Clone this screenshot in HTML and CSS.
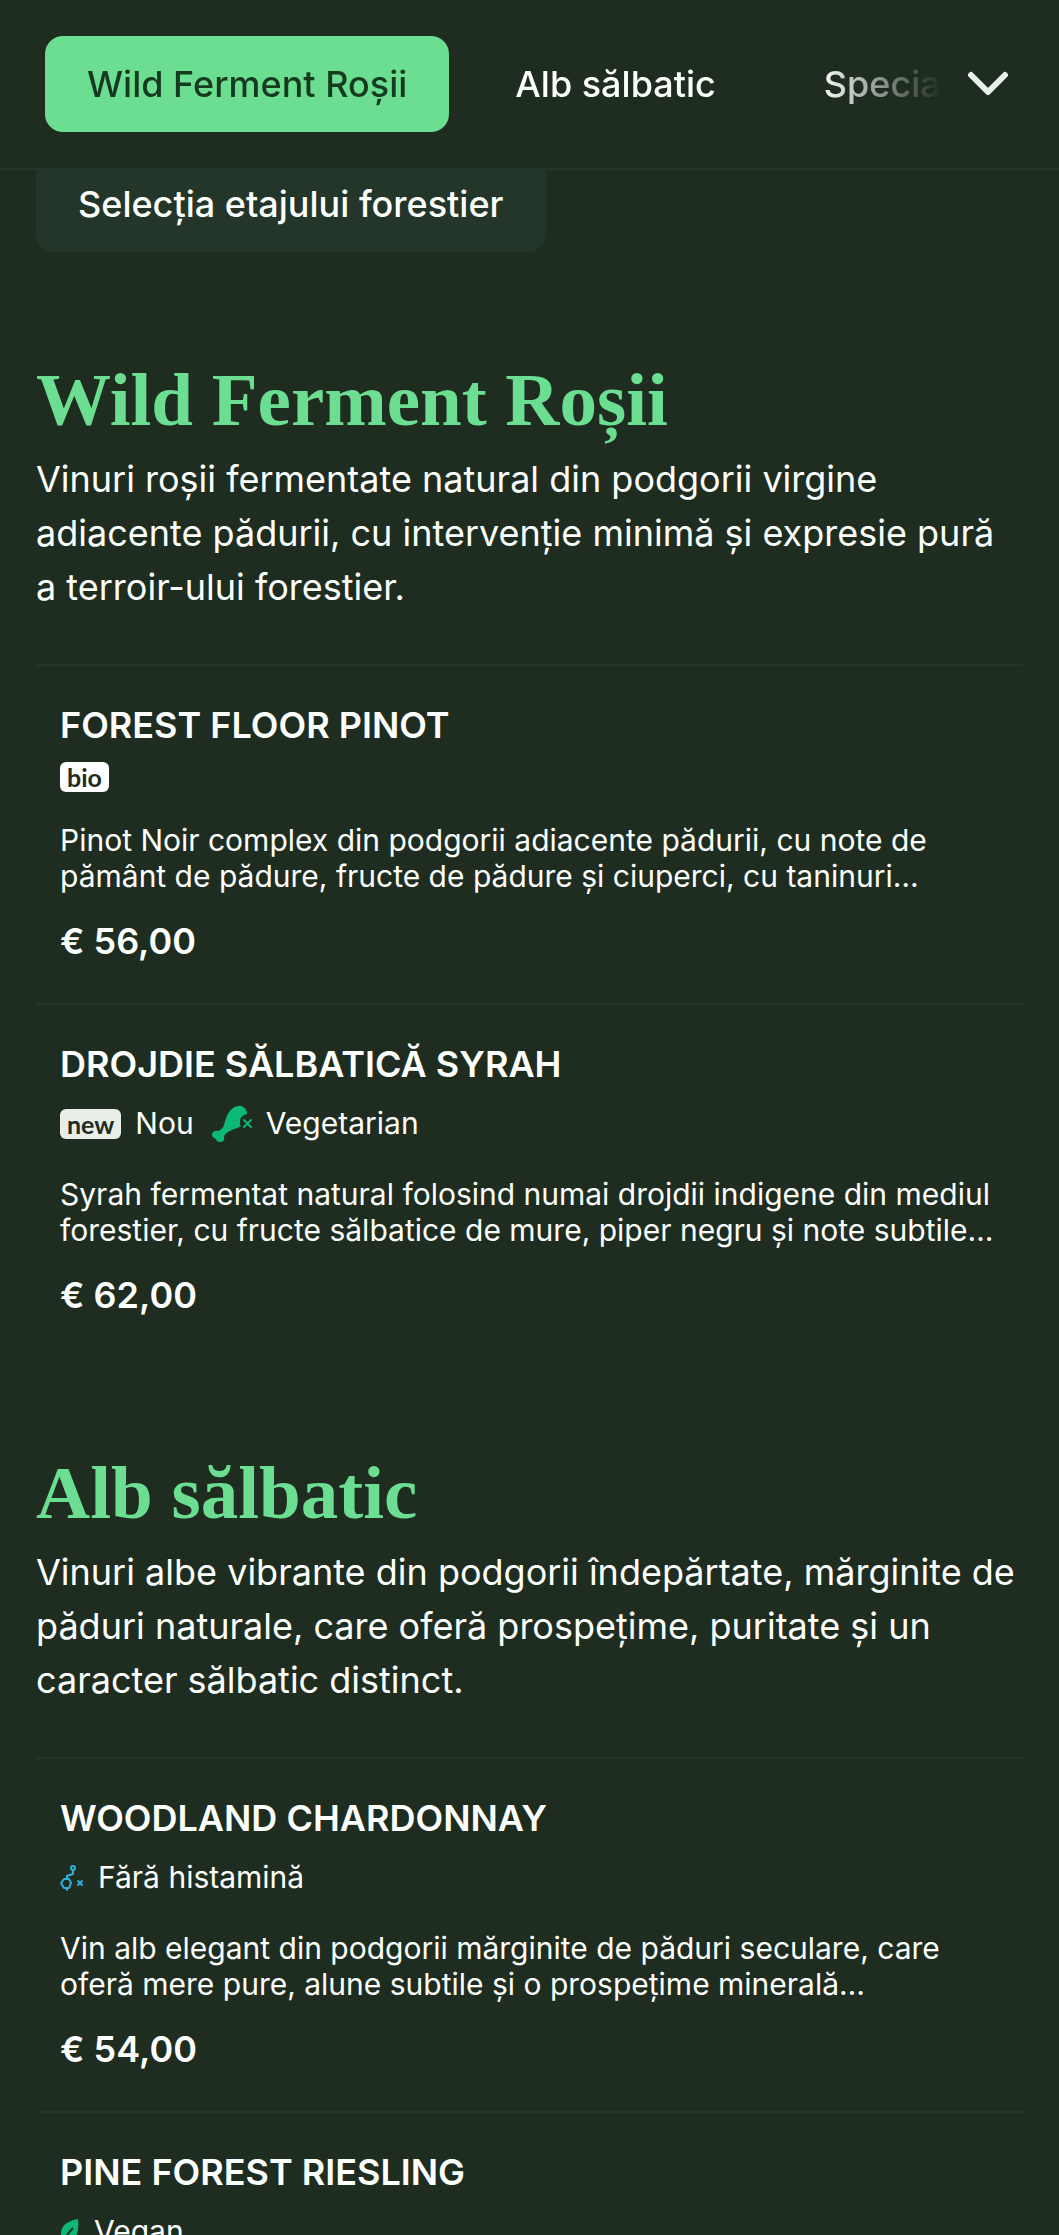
FILE: index.html
```html
<!DOCTYPE html>
<html lang="ro">
<head>
  <meta charset="UTF-8" />
  <meta name="viewport" content="width=device-width, initial-scale=1.0"/>
  <title>Meniu vinuri</title>
  <link rel="stylesheet" href="styles.css">
</head>
<body>
  <header class="topbar">
    <nav class="tabs">
      <a class="tab active" href="#rosii">Wild Ferment Roșii</a>
      <a class="tab" href="#alb">Alb sălbatic</a>
      <a class="tab" href="#special">Specialități</a>
    </nav>
    <button class="toggle" aria-label="Toate categoriile">
      <svg width="42" height="26" viewBox="0 0 42 26" fill="none" stroke="currentColor" stroke-width="6" stroke-linecap="round" stroke-linejoin="round">
        <path d="M4 4l17 17L38 4"/>
      </svg>
    </button>
  </header>

  <main class="menu">
    <a class="chip" href="#selectia">Selecția etajului forestier</a>

    <section class="category" id="rosii">
      <h2>Wild Ferment Roșii</h2>
      <p class="intro">Vinuri roșii fermentate natural din podgorii virgine adiacente pădurii, cu intervenție minimă și expresie pură a terroir-ului forestier.</p>

      <article class="item">
        <h3>FOREST FLOOR PINOT</h3>
        <div class="tags">
          <span class="badge bio">bio</span>
        </div>
        <p class="desc">Pinot Noir complex din podgorii adiacente pădurii, cu note de pământ de pădure, fructe de pădure și ciuperci, cu taninuri…</p>
        <div class="price">€ 56,00</div>
      </article>

      <article class="item">
        <h3>DROJDIE SĂLBATICĂ SYRAH</h3>
        <div class="tags">
          <span class="tag"><span class="badge new">new</span>Nou</span>
          <span class="tag">
            <svg width="40" height="38" viewBox="0 0 40 38">
              <path fill="#0bb874" d="M12 20C14 11 18 2 26 1c5-1 9 3 9 8-4 1-7 3-7 8 0 2 0 3 1 4-4 3-9 3-13 6-2 1-4 3-4 5 1 3-1 5-4 5-2 0-4-1-4-3-2-1-4-2-4-4 0-4 4-5 7-4 2-2 4-3 5-6z"/>
              <path stroke="#0bb874" stroke-width="2" stroke-linecap="round" d="M32 15l7 7M39 15l-7 7"/>
            </svg>
            Vegetarian
          </span>
        </div>
        <p class="desc">Syrah fermentat natural folosind numai drojdii indigene din mediul forestier, cu fructe sălbatice de mure, piper negru și note subtile…</p>
        <div class="price">€ 62,00</div>
      </article>
    </section>

    <section class="category" id="alb">
      <h2>Alb sălbatic</h2>
      <p class="intro">Vinuri albe vibrante din podgorii îndepărtate, mărginite de păduri naturale, care oferă prospețime, puritate și un caracter sălbatic distinct.</p>

      <article class="item">
        <h3>WOODLAND CHARDONNAY</h3>
        <div class="tags">
          <span class="tag">
            <svg width="24" height="26" viewBox="0 0 24 26" fill="none" stroke="#2db1dc" stroke-width="2" stroke-linecap="round" stroke-linejoin="round">
              <circle cx="13" cy="3" r="2"/>
              <path d="M13 5v4l-6 2v3M4 14h5l2 4-2 5H4l-3-5zM7 23v2M18 16l4 4M22 16l-4 4"/>
            </svg>
            Fără histamină
          </span>
        </div>
        <p class="desc">Vin alb elegant din podgorii mărginite de păduri seculare, care oferă mere pure, alune subtile și o prospețime minerală…</p>
        <div class="price">€ 54,00</div>
      </article>

      <article class="item">
        <h3>PINE FOREST RIESLING</h3>
        <div class="tags">
          <span class="tag">
            <svg width="20" height="26" viewBox="0 0 20 26">
              <path fill="#0bb874" d="M18 0c1 10 0 20-9 22l-4-1-2 4-2-1 1-5C-2 9 6 2 18 0z"/>
              <path fill="none" stroke="#1f2d21" stroke-width="2" d="M13 9C9 13 6 17 4 22"/>
            </svg>
            Vegan
          </span>
        </div>
      </article>
    </section>
  </main>
</body>
</html>
```
FILE: styles.css
```css
* {
  box-sizing: border-box;
}
body {
  margin: 0;
  height: 100vh;
  overflow: hidden;
  background: #1f2d21;
  color: #fcfffc;
  font-family: Inter, "Noto Sans", sans-serif;
  font-size: 36px;
  line-height: 54px;
}
h2, h3, p {
  margin: 0;
}
a {
  color: inherit;
  text-decoration: none;
}

/* Top navigation */
.topbar {
  position: relative;
  z-index: 2;
  display: flex;
  align-items: flex-start;
  padding: 36px 50px 36px 45px;
  background: #1f2d21;
  border-bottom: 2px solid #24362a;
}
.tabs {
  display: flex;
  flex: 1;
  gap: 24px;
  min-width: 0;
  overflow: hidden;
  -webkit-mask-image: linear-gradient(to left, transparent, #000 120px);
  mask-image: linear-gradient(to left, transparent, #000 120px);
}
.tab, .chip {
  padding: 21px 42px;
  border-radius: 18px;
  font-weight: 500;
  white-space: nowrap;
}
.tab.active {
  background: #6cde91;
  color: #163a20;
}
.toggle {
  display: flex;
  align-items: center;
  height: 96px;
  margin-left: 26px;
  padding: 0;
  border: none;
  background: none;
  color: #e9f0e9;
  cursor: pointer;
}

.menu {
  padding: 0 36px;
}
.chip {
  display: inline-block;
  margin: -14px 0 12px;
  background: #24362a;
}

/* Categories */
.category {
  padding-top: 94px;
}
h2 {
  color: #6cde91;
  font-family: "Liberation Serif", serif;
  font-size: 75px;
  font-weight: 700;
  line-height: 84px;
}
.intro {
  margin: 10px 0 50px;
}

/* Wine list */
.item {
  padding: 32px 24px 35px;
  border-top: 2px solid #24362a;
}
h3, .price {
  font-size: 36px;
  font-weight: 600;
}
.tags {
  display: flex;
  gap: 18px;
  margin: 10px 0 30px;
  font-size: 30px;
  line-height: 45px;
}
.tag {
  display: flex;
  align-items: center;
  gap: 14px;
}
.badge {
  padding: 0 7px;
  border-radius: 6px;
  background: #e9eee9;
  color: #1f2d21;
  font-family: Lato, sans-serif;
  font-size: 25px;
  font-weight: 700;
  line-height: 30px;
}
.bio {
  background: #fff;
}
.desc {
  font-size: 30px;
  line-height: 36px;
}
.price {
  margin-top: 20px;
}
```
